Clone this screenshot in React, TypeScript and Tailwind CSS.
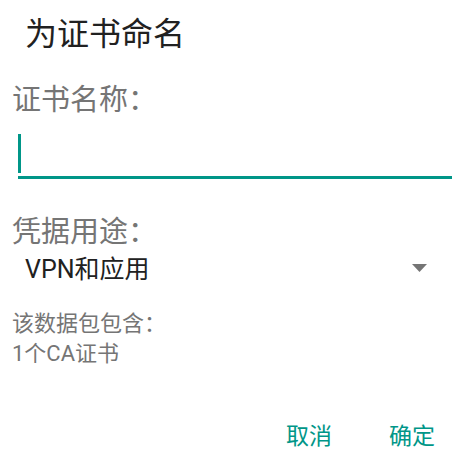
import React from "react";

const font = { fontFamily: "Roboto, 'Noto Sans CJK SC', sans-serif" };

export default function App() {
  return (
    <div
      className="w-[474px] h-[454px] bg-white overflow-hidden flex flex-col"
      style={font}
    >
      {/* Dialog title */}
      <div className="h-[68px] leading-[68px] pl-[25px] text-[32px] text-[#212121]">
        为证书命名
      </div>

      <div className="flex flex-col pl-[12px]">
        <div className="h-[64px] leading-[64px] text-[29px] text-[#757575]">
          证书名称：
        </div>

        {/* Name input, focused */}
        <div className="ml-[6px] w-[434px] h-[47px] border-b-[3px] border-[#009688] pt-[2px]">
          <div className="w-[3px] h-[39px] bg-[#009688]" />
        </div>

        <div className="mt-[33px] h-[40px] leading-[40px] text-[29px] text-[#757575]">
          凭据用途：
        </div>

        {/* Usage spinner */}
        <div className="h-[36px] w-[440px] flex items-center pl-[13px] pr-[25px]">
          <span className="text-[25px] leading-[36px] text-[#212121]">VPN和应用</span>
          <svg className="ml-auto mb-[4px]" width="15" height="8" viewBox="0 0 15 8">
            <polygon points="0,0 15,0 7.5,8" fill="#757575" />
          </svg>
        </div>

        <div className="mt-[21px] text-[22px] leading-[30px] text-[#757575]">
          <div>该数据包包含：</div>
          <div>1个CA证书</div>
        </div>
      </div>

      {/* Dialog buttons */}
      <div className="mt-[50px] h-[36px] flex items-center justify-end gap-[57px] pr-[39px] text-[23px] leading-[36px] text-[#009688]">
        <span>取消</span>
        <span>确定</span>
      </div>
    </div>
  );
}
